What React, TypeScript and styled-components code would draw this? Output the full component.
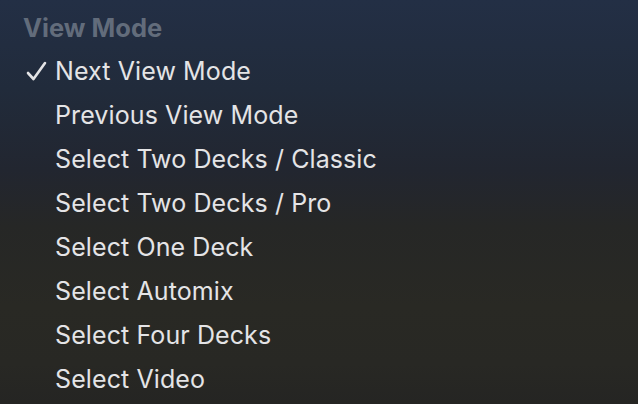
import React, { FC } from "react";
import styled, { createGlobalStyle } from "styled-components";

const GlobalStyle = createGlobalStyle`
	html, body {
		margin: 0;
		padding: 0;
		width: 638px;
		height: 404px;
		overflow: hidden;
	}
	body {
		font-family: Inter, "Noto Sans", "Liberation Sans", sans-serif;
		-webkit-font-smoothing: antialiased;
	}
`;

const Menu = styled.div`
	width: 638px;
	height: 404px;
	box-sizing: border-box;
	padding-top: 8px;
	display: flex;
	flex-direction: column;
	background: linear-gradient(
		180deg,
		#232f45 0%,
		#212b3b 22%,
		#222630 42%,
		#262726 56%,
		#292924 76%,
		#282824 90%,
		#252523 100%
	);
`;

const Header = styled.div`
	height: 41px;
	display: flex;
	align-items: center;
	padding-left: 23px;
	padding-bottom: 3px;
	box-sizing: border-box;
	font-size: 25.5px;
	font-weight: 700;
	color: #626c7b;
`;

const Item = styled.div`
	height: 44px;
	display: flex;
	align-items: center;
	font-size: 25px;
	font-weight: 400;
	color: #e4e4e6;
	letter-spacing: 0.1px;
`;

const CheckSlot = styled.span`
	width: 55px;
	height: 44px;
	box-sizing: border-box;
	padding-left: 26px;
	display: flex;
	align-items: center;
`;

const CheckMark: FC = () => (
	<svg width="22" height="22" viewBox="0 0 22 22">
		<path
			d="M2 13 L7.5 19 L19 3"
			fill="none"
			stroke="#e4e4e6"
			strokeWidth="2.6"
			strokeLinecap="round"
			strokeLinejoin="round"
		/>
	</svg>
);

interface MenuItemProps {
	label: string;
	checked?: boolean;
}

const MenuItem: FC<MenuItemProps> = ({ label, checked }) => (
	<Item>
		<CheckSlot>{checked && <CheckMark />}</CheckSlot>
		{label}
	</Item>
);

const items = [
	"Next View Mode",
	"Previous View Mode",
	"Select Two Decks / Classic",
	"Select Two Decks / Pro",
	"Select One Deck",
	"Select Automix",
	"Select Four Decks",
	"Select Video",
];

const App: FC = () => (
	<>
		<GlobalStyle />
		<Menu>
			<Header>View Mode</Header>
			{items.map((label, i) => (
				<MenuItem key={label} label={label} checked={i === 0} />
			))}
		</Menu>
	</>
);

export default App;
